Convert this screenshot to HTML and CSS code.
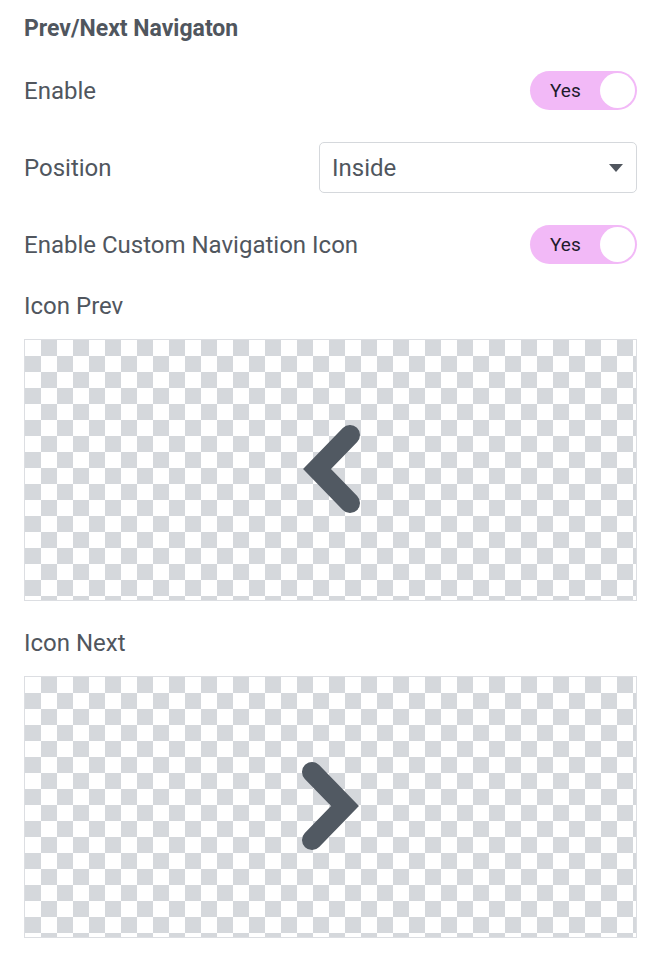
FILE: index.html
```html
<!DOCTYPE html>
<html lang="en">
<head>
<meta charset="UTF-8">
<meta name="viewport" content="width=device-width, initial-scale=1.0">
<title>Prev/Next Navigaton</title>
<link rel="stylesheet" href="styles.css">
</head>
<body>
  <div class="panel">
    <h2 class="panel-title">Prev/Next Navigaton</h2>

    <div class="row row-enable">
      <span class="label">Enable</span>
      <div class="switch"><span class="switch-text">Yes</span><span class="knob"></span></div>
    </div>

    <div class="row row-position">
      <span class="label">Position</span>
      <div class="select">
        <span>Inside</span>
        <span class="caret"></span>
      </div>
    </div>

    <div class="row row-custom">
      <span class="label">Enable Custom Navigation Icon</span>
      <div class="switch"><span class="switch-text">Yes</span><span class="knob"></span></div>
    </div>

    <div class="label label-block">Icon Prev</div>
    <div class="icon-box">
      <svg width="60" height="90" viewBox="0 0 60 90">
        <polyline points="49,10 16,44 49,78" fill="none" stroke="#515962" stroke-width="20" stroke-linecap="round" stroke-linejoin="miter"/>
      </svg>
    </div>

    <div class="label label-block">Icon Next</div>
    <div class="icon-box">
      <svg width="60" height="90" viewBox="0 0 60 90">
        <polyline points="11,10 44,44 11,78" fill="none" stroke="#515962" stroke-width="20" stroke-linecap="round" stroke-linejoin="miter"/>
      </svg>
    </div>
  </div>
</body>
</html>
```

FILE: styles.css
```css
body {
  margin: 0;
  background-color: #fff;
  color: #50565e;
  font-family: Roboto, "Liberation Sans", sans-serif;
}
.panel {
  display: flex;
  flex-direction: column;
  padding: 15px 17px 0 24px;
}
.panel-title {
  margin: 0;
  font-size: 23px;
  font-weight: 700;
  line-height: 28px;
}
.row {
  display: flex;
  align-items: center;
  justify-content: space-between;
}
.row-enable {
  margin-top: 28px;
}
.row-position {
  margin-top: 32px;
}
.row-custom {
  margin-top: 32px;
}
.label {
  font-size: 24px;
  line-height: 28px;
}
.label-block {
  margin-top: 28px;
}
.switch {
  position: relative;
  width: 107px;
  height: 39px;
  border-radius: 20px;
  background-color: #f2b9f7;
  box-sizing: border-box;
}
.switch-text {
  position: absolute;
  left: 20px;
  top: 0;
  line-height: 39px;
  font-size: 19px;
  color: #1d1b2c;
}
.knob {
  position: absolute;
  right: 2px;
  top: 2px;
  width: 35px;
  height: 35px;
  border-radius: 50%;
  background-color: #fff;
}
.select {
  display: flex;
  align-items: center;
  justify-content: space-between;
  width: 318px;
  height: 51px;
  box-sizing: border-box;
  padding: 0 13px 0 12px;
  border: 1px solid #d5d8dc;
  border-radius: 5px;
  font-size: 24px;
}
.caret {
  width: 0;
  height: 0;
  border-left: 7px solid transparent;
  border-right: 7px solid transparent;
  border-top: 8px solid #50565e;
}
.icon-box {
  display: flex;
  align-items: center;
  justify-content: center;
  height: 262px;
  margin-top: 19px;
  box-sizing: border-box;
  border: 1px solid #dcdee2;
  background: repeating-conic-gradient(#d5d8dc 0 25%, #fff 0 50%) 0 0 / 32px 32px;
}
```
